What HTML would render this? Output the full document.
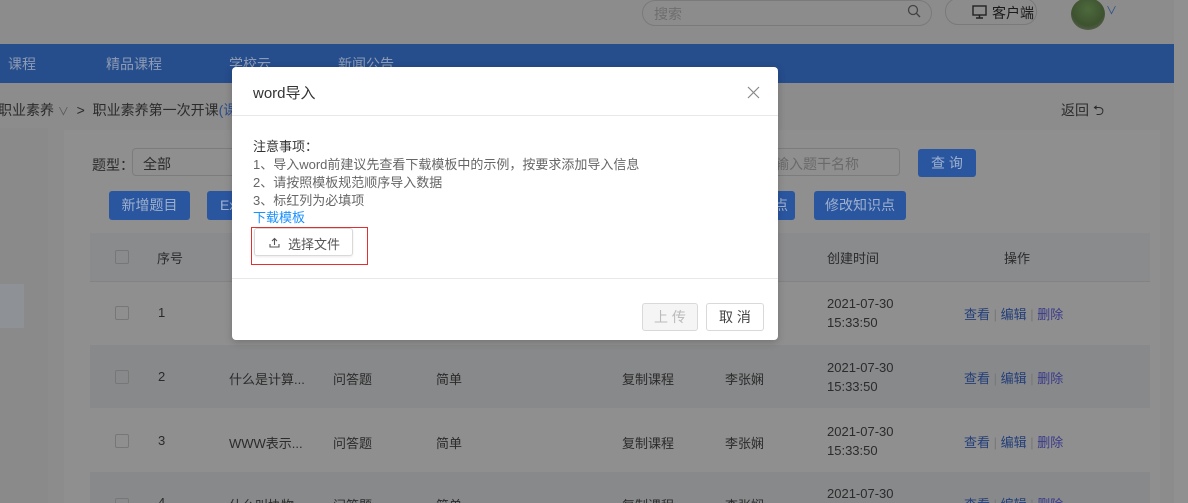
<!DOCTYPE html>
<html><head><meta charset="utf-8"><style>
*{margin:0;padding:0;box-sizing:border-box}
html,body{width:1188px;height:503px;overflow:hidden}
body{background:#8c8c8c;font-family:"Liberation Sans","Noto Sans CJK SC",sans-serif;font-size:13px;color:#333;position:relative}
.a{position:absolute;white-space:nowrap}
.dk{color:#2b2b2b}
</style></head><body>
<div class="a" style="left:642px;top:0;width:290px;height:26px;border:1px solid #7a7a7a;border-radius:13px;"></div>
<div class="a" style="left:654px;top:4px;color:#6e6e6e;font-size:14px">搜索</div>
<svg class="a" style="left:907px;top:4px" width="14" height="14" viewBox="0 0 14 14"><circle cx="6" cy="6" r="4.5" fill="none" stroke="#444" stroke-width="1.3"/><path d="M9.3 9.3L13 13" stroke="#444" stroke-width="1.4"/></svg>
<div class="a" style="left:945px;top:-2px;width:92px;height:27px;border:1px solid #7a7a7a;border-radius:13px;"></div>
<svg class="a" style="left:972px;top:5px" width="15" height="14" viewBox="0 0 15 14"><rect x="1" y="1" width="13" height="9" fill="none" stroke="#222" stroke-width="1.4"/><path d="M7.5 10v3M4 13h7" stroke="#222" stroke-width="1.4"/></svg>
<div class="a" style="left:992px;top:3px;color:#1a1a1a;font-size:14px">客户端</div>
<div class="a" style="left:1071px;top:-2px;width:34px;height:32px;border-radius:50%;background:radial-gradient(circle at 50% 35%,#4e6a3c,#3d5230 60%,#6b6b5e)"></div>
<div class="a" style="left:1106px;top:2px;color:#2a4d8a;font-size:11px">∨</div>
<div class="a" style="left:1174px;top:0;width:14px;height:503px;background:#909090"></div>
<div class="a" style="left:0;top:44px;width:1174px;height:39px;background:#264d8c"></div>
<div class="a" style="left:8px;top:54px;color:#8e9bb4;font-size:14px">课程</div>
<div class="a" style="left:106px;top:54px;color:#8e9bb4;font-size:14px">精品课程</div>
<div class="a" style="left:229px;top:54px;color:#8e9bb4;font-size:14px">学校云</div>
<div class="a" style="left:338px;top:54px;color:#8e9bb4;font-size:14px">新闻公告</div>
<div class="a dk" style="left:-2px;top:100px;font-size:14px">职业素养 <span style="font-size:11px;color:#555">∨</span> &nbsp;&gt;&nbsp; 职业素养第一次开课<span style="color:#2a4d8a">(课</span></div>
<div class="a dk" style="left:1061px;top:100px;font-size:14px">返回 ⮌</div>
<div class="a" style="left:0;top:128px;width:48px;height:375px;background:#8a8a8a"></div>
<div class="a" style="left:0;top:284px;width:24px;height:44px;background:#8e9196"></div>
<div class="a" style="left:64px;top:130px;width:1096px;height:373px;background:#8f8f8f"></div>
<div class="a dk" style="left:92px;top:155px;font-size:14px">题型：</div>
<div class="a" style="left:132px;top:148px;width:120px;height:28px;border:1px solid #7c7c7c;border-radius:4px;padding:5px 10px;color:#2b2b2b;font-size:14px">全部</div>
<div class="a" style="left:750px;top:148px;width:150px;height:28px;border:1px solid #7c7c7c;border-radius:4px;padding:5px 10px;color:#6a6a6a;font-size:14px">请输入题干名称</div>
<div class="a" style="left:918px;top:149px;width:58px;height:28px;background:#2a56a0;border-radius:3px;color:#9fb0cd;font-size:14px;text-align:center;line-height:28px">查 询</div>
<div class="a" style="left:109px;top:191px;width:81px;height:29px;background:#2a56a0;border-radius:3px;color:#9fb0cd;font-size:14px;text-align:center;line-height:29px">新增题目</div>
<div class="a" style="left:207px;top:191px;width:40px;height:29px;background:#2a56a0;border-radius:3px;color:#9fb0cd;font-size:14px;line-height:29px;padding-left:13px">Ex</div>
<div class="a" style="left:760px;top:191px;width:35px;height:29px;background:#2a56a0;border-radius:3px;color:#9fb0cd;font-size:14px;line-height:29px;padding-left:14px">点</div>
<div class="a" style="left:814px;top:191px;width:92px;height:29px;background:#2a56a0;border-radius:3px;color:#9fb0cd;font-size:14px;text-align:center;line-height:29px">修改知识点</div>
<div class="a" style="left:90px;top:233px;width:1060px;height:49px;background:#8a8b8d;border-bottom:1px solid #838383"></div>
<div class="a" style="left:90px;top:345px;width:1060px;height:63px;background:#88898a"></div>
<div class="a" style="left:90px;top:472px;width:1060px;height:31px;background:#88898a"></div>
<div class="a dk" style="left:157px;top:248px">序号</div>
<div class="a dk" style="left:827px;top:248px">创建时间</div>
<div class="a dk" style="left:1004px;top:248px">操作</div>
<div class="a" style="left:115px;top:250px;width:14px;height:14px;border:1px solid #777;border-radius:2px"></div>

<div class="a" style="left:115px;top:306px;width:14px;height:14px;border:1px solid #777;border-radius:2px"></div>
<div class="a dk" style="left:158px;top:305px">1</div>
<div class="a dk" style="left:827px;top:294px;line-height:19px">2021-07-30<br>15:33:50</div>
<div class="a" style="left:964px;top:304px;color:#243f7a">查看 <span style="color:#777">|</span> 编辑 <span style="color:#777">|</span> <span style="color:#3a3a8a">删除</span></div>

<div class="a" style="left:115px;top:370px;width:14px;height:14px;border:1px solid #777;border-radius:2px"></div>
<div class="a dk" style="left:158px;top:369px">2</div>
<div class="a dk" style="left:229px;top:369px">什么是计算...</div>
<div class="a dk" style="left:333px;top:369px">问答题</div>
<div class="a dk" style="left:436px;top:369px">简单</div>
<div class="a dk" style="left:622px;top:369px">复制课程</div>
<div class="a dk" style="left:725px;top:369px">李张娴</div>
<div class="a dk" style="left:827px;top:358px;line-height:19px">2021-07-30<br>15:33:50</div>
<div class="a" style="left:964px;top:368px;color:#243f7a">查看 <span style="color:#777">|</span> 编辑 <span style="color:#777">|</span> <span style="color:#3a3a8a">删除</span></div>

<div class="a" style="left:115px;top:434px;width:14px;height:14px;border:1px solid #777;border-radius:2px"></div>
<div class="a dk" style="left:158px;top:433px">3</div>
<div class="a dk" style="left:229px;top:433px">WWW表示...</div>
<div class="a dk" style="left:333px;top:433px">问答题</div>
<div class="a dk" style="left:436px;top:433px">简单</div>
<div class="a dk" style="left:622px;top:433px">复制课程</div>
<div class="a dk" style="left:725px;top:433px">李张娴</div>
<div class="a dk" style="left:827px;top:422px;line-height:19px">2021-07-30<br>15:33:50</div>
<div class="a" style="left:964px;top:432px;color:#243f7a">查看 <span style="color:#777">|</span> 编辑 <span style="color:#777">|</span> <span style="color:#3a3a8a">删除</span></div>

<div class="a" style="left:115px;top:498px;width:14px;height:14px;border:1px solid #777;border-radius:2px"></div>
<div class="a dk" style="left:158px;top:495px">4</div>
<div class="a dk" style="left:229px;top:495px">什么叫协物...</div>
<div class="a dk" style="left:333px;top:495px">问答题</div>
<div class="a dk" style="left:436px;top:495px">简单</div>
<div class="a dk" style="left:622px;top:495px">复制课程</div>
<div class="a dk" style="left:725px;top:495px">李张娴</div>
<div class="a dk" style="left:827px;top:486px">2021-07-30</div>
<div class="a" style="left:964px;top:494px;color:#243f7a">查看 <span style="color:#777">|</span> 编辑 <span style="color:#777">|</span> <span style="color:#3a3a8a">删除</span></div>

<div class="a" style="left:232px;top:67px;width:546px;height:273px;background:#fff;border-radius:4px;box-shadow:0 2px 8px rgba(0,0,0,.2)">
  <div class="a" style="left:21px;top:15px;font-size:15px;color:#333">word导入</div>
  <svg class="a" style="left:515px;top:19px" width="13" height="13" viewBox="0 0 13 13"><path d="M1 1L12 12M12 1L1 12" stroke="#888" stroke-width="1.2"/></svg>
  <div class="a" style="left:0;top:48px;width:546px;height:1px;background:#e8e8e8"></div>
  <div class="a" style="left:21px;top:71px;font-size:13px;color:#333;line-height:18px">注意事项：</div>
  <div class="a" style="left:21px;top:89px;font-size:13px;color:#666;line-height:18px">1、导入word前建议先查看下载模板中的示例，按要求添加导入信息<br>2、请按照模板规范顺序导入数据<br>3、标红列为必填项</div>
  <div class="a" style="left:21px;top:142px;font-size:13px;color:#1890ff;line-height:18px">下载模板</div>
  <div class="a" style="left:19px;top:160px;width:117px;height:38px;border:1px solid #e03030"></div>
  <div class="a" style="left:22px;top:161px;width:99px;height:28px;border:1px solid #d9d9d9;border-radius:3px;box-shadow:0 1px 2px rgba(0,0,0,.08)"></div>
  <svg class="a" style="left:37px;top:170px" width="11" height="11" viewBox="0 0 11 11"><path d="M5.5 8V1.5M3 4L5.5 1.5 8 4M1 7v3h9V7" fill="none" stroke="#555" stroke-width="1.1"/></svg>
  <div class="a" style="left:56px;top:167px;font-size:13px;color:#555">选择文件</div>
  <div class="a" style="left:0;top:211px;width:546px;height:1px;background:#e8e8e8"></div>
  <div class="a" style="left:410px;top:236px;width:56px;height:28px;border:1px solid #d9d9d9;border-radius:3px;background:#f5f5f5;color:#bbb;text-align:center;line-height:26px;font-size:14px">上 传</div>
  <div class="a" style="left:474px;top:236px;width:58px;height:28px;border:1px solid #d9d9d9;border-radius:3px;background:#fff;color:#444;text-align:center;line-height:26px;font-size:14px">取 消</div>
</div>
</body></html>
